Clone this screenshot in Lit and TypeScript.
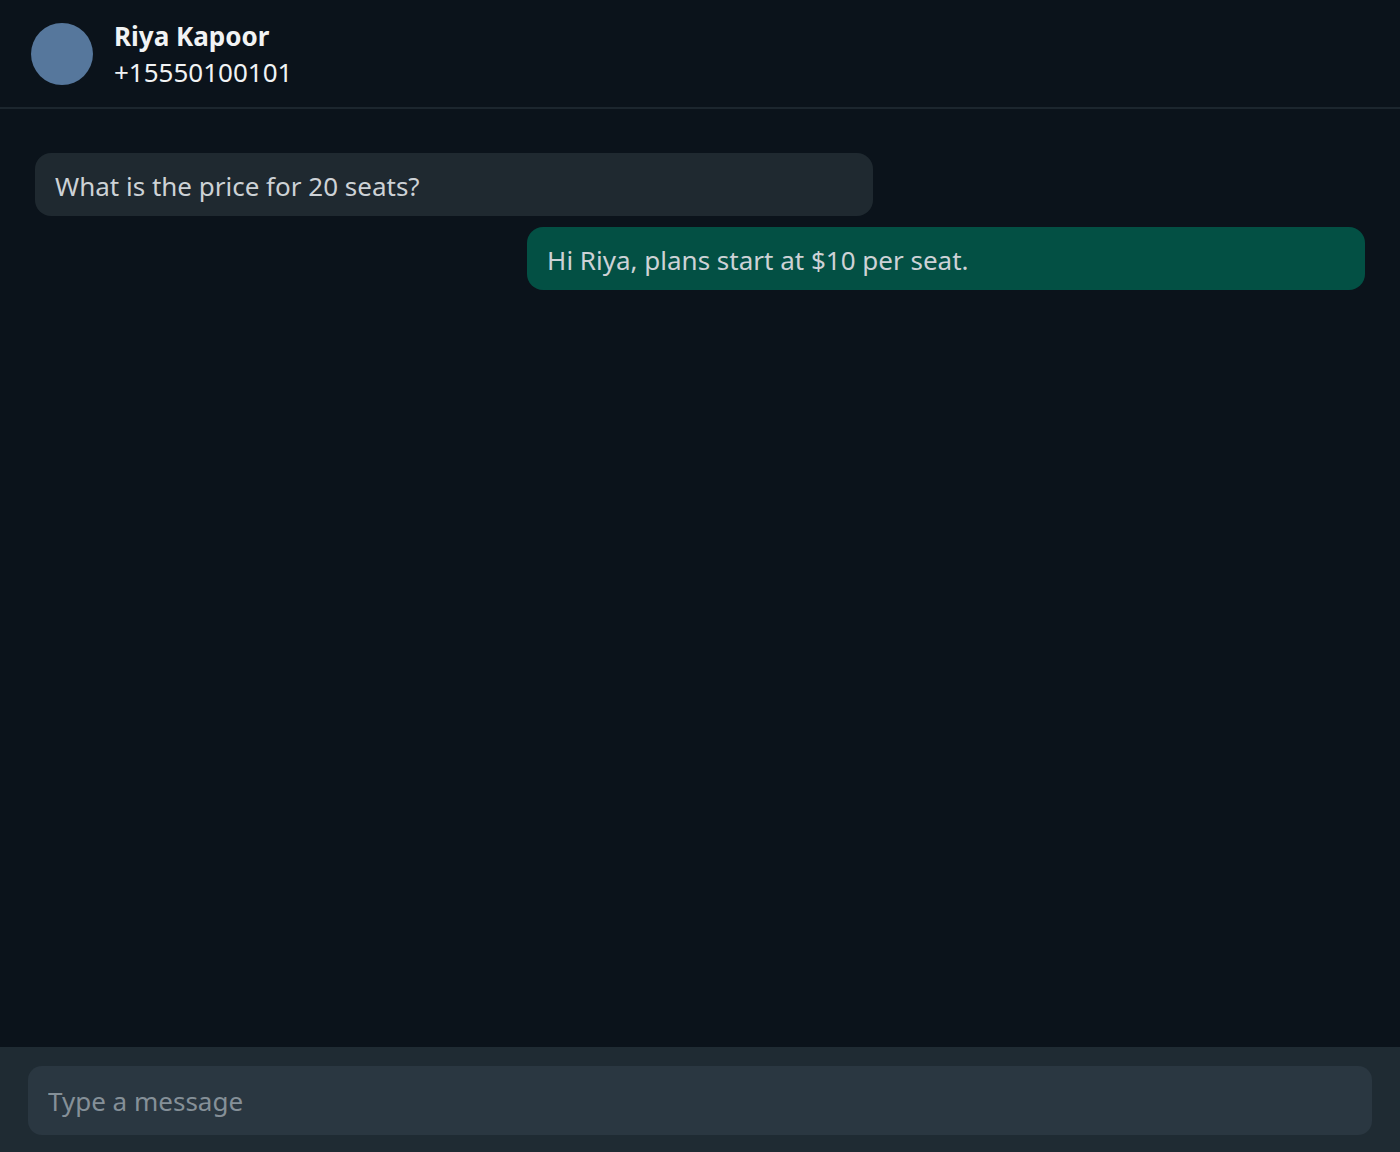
import { LitElement, html, css } from "lit";
import { customElement, state } from "lit/decorators.js";

interface Message {
  text: string;
  sent: boolean;
}

@customElement("app-root")
export class AppRoot extends LitElement {
  static styles = css`
    :host {
      display: flex;
      flex-direction: column;
      min-height: 100vh;
      background: #0b131b;
      color: #f1f3f4;
      font-family: "Segoe UI", "Noto Sans", "Open Sans", sans-serif;
      font-size: 26px;
      line-height: 36px;
    }
    * {
      box-sizing: border-box;
    }
    .header {
      display: flex;
      align-items: center;
      gap: 21px;
      padding: 18px 31px 17px;
      border-bottom: 2px solid #1c262e;
    }
    .avatar {
      width: 62px;
      height: 62px;
      border-radius: 50%;
      background: #56779c;
    }
    .name {
      margin: 0;
      font-size: 26px;
      font-weight: 700;
    }
    .phone {
      margin: 0;
    }
    .messages {
      flex: 1;
      display: flex;
      flex-direction: column;
      gap: 11px;
      margin: 0;
      padding: 44px 35px;
      list-style: none;
    }
    .bubble {
      width: 63%;
      padding: 15px 20px 12px;
      border-radius: 16px;
      background: #1f2930;
      color: #cdd2d6;
    }
    .sent {
      align-self: flex-end;
      background: #035044;
    }
    .composer {
      padding: 19px 28px 17px;
      background: #1f2b33;
    }
    .field {
      display: block;
      width: 100%;
      padding: 17px 20px 16px;
      border: 0;
      border-radius: 14px;
      outline: none;
      background: #2a3741;
      color: #cdd2d6;
      font: inherit;
    }
    .field::placeholder {
      color: #859098;
      opacity: 1;
    }
  `;

  @state() private messages: Message[] = [
    { text: "What is the price for 20 seats?", sent: false },
    { text: "Hi Riya, plans start at $10 per seat.", sent: true },
  ];

  private send(event: SubmitEvent) {
    event.preventDefault();
    const form = event.target as HTMLFormElement;
    const text = String(new FormData(form).get("message") ?? "").trim();
    if (!text) return;
    this.messages = [...this.messages, { text, sent: true }];
    form.reset();
  }

  render() {
    return html`
      <header class="header">
        <div class="avatar"></div>
        <div>
          <h1 class="name">Riya Kapoor</h1>
          <p class="phone">+15550100101</p>
        </div>
      </header>
      <ul class="messages">
        ${this.messages.map(
          (m) => html`<li class="bubble ${m.sent ? "sent" : ""}">${m.text}</li>`
        )}
      </ul>
      <form class="composer" @submit=${this.send}>
        <input
          class="field"
          name="message"
          type="text"
          autocomplete="off"
          aria-label="Type a message"
          placeholder="Type a message"
        />
      </form>
    `;
  }
}
